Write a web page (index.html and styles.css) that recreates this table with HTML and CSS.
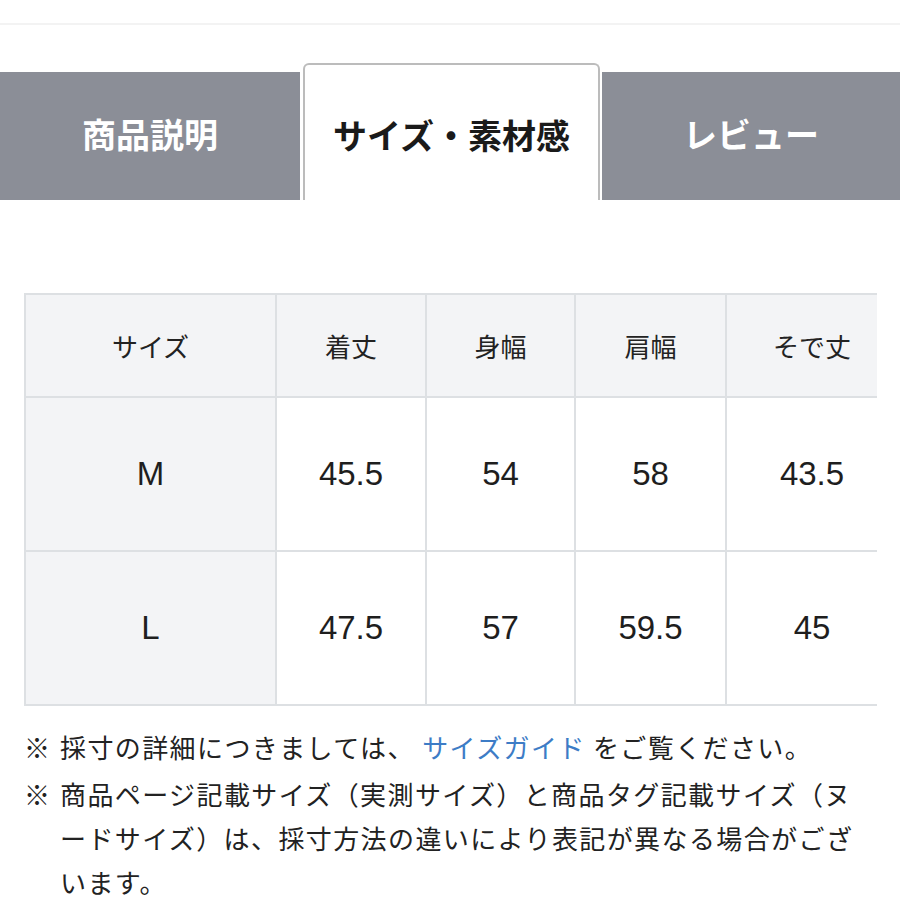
FILE: index.html
```html
<!DOCTYPE html>
<html lang="ja">
<head>
<meta charset="utf-8">
<link rel="stylesheet" href="styles.css">
</head>
<body>
<div class="topline"></div>
<div class="tabs">
  <div class="tab">商品説明</div>
  <div class="tab active">サイズ・素材感</div>
  <div class="tab">レビュー</div>
</div>
<div class="table-wrap">
  <table class="size-table">
    <tr class="head">
      <td>サイズ</td><td>着丈</td><td>身幅</td><td>肩幅</td><td>そで丈</td>
    </tr>
    <tr>
      <td class="size">M</td><td>45.5</td><td>54</td><td>58</td><td>43.5</td>
    </tr>
    <tr>
      <td class="size">L</td><td>47.5</td><td>57</td><td>59.5</td><td>45</td>
    </tr>
  </table>
</div>
<div class="notes">
  <div class="note"><span class="mark">※</span><span class="body">採寸の詳細につきましては、 <a class="link">サイズガイド</a> をご覧ください。</span></div>
  <div class="note"><span class="mark">※</span><span class="body">商品ページ記載サイズ（実測サイズ）と商品タグ記載サイズ（ヌ<br>ードサイズ）は、採寸方法の違いにより表記が異なる場合がござ<br>います。</span></div>
</div>
</body>
</html>
```
FILE: styles.css
```css
html, body {
  margin: 0;
  padding: 0;
  background: #ffffff;
}
body {
  font-family: "Noto Sans CJK JP", "Noto Sans", sans-serif;
  color: #222222;
  width: 900px;
  overflow: hidden;
}
.topline {
  height: 23px;
  border-bottom: 2px solid #f3f3f3;
}
.tabs {
  display: flex;
  align-items: flex-end;
  margin-top: 38px;
  height: 137px;
}
.tab {
  height: 128px;
  background: #8b8e97;
  color: #ffffff;
  font-size: 34px;
  font-weight: 700;
  display: flex;
  align-items: center;
  justify-content: center;
  box-sizing: border-box;
  padding-bottom: 5px;
}
.tab:first-child {
  width: 300px;
}
.tab:last-child {
  flex: 1;
}
.tab.active {
  width: 297px;
  height: 137px;
  margin: 0 2px 0 3px;
  background: #ffffff;
  color: #1a1a1a;
  border: 2px solid #bcbcbc;
  border-bottom: none;
  border-radius: 6px 6px 0 0;
  padding-top: 4px;
  padding-bottom: 0;
}
.table-wrap {
  margin: 93px 0 0 24px;
  width: 853px;
  overflow: hidden;
}
.size-table {
  border-collapse: collapse;
  width: 875px;
  table-layout: fixed;
}
.size-table td {
  border: 2px solid #dde0e3;
  text-align: center;
  vertical-align: middle;
  font-family: "Liberation Sans", Arial, sans-serif;
  font-size: 33px;
  color: #1e1e1e;
  height: 152px;
  padding: 0;
  background: #ffffff;
}
.size-table td:nth-child(1) { width: 249px; }
.size-table td:nth-child(2) { width: 148px; }
.size-table td:nth-child(3) { width: 147px; }
.size-table td:nth-child(4) { width: 149px; }
.size-table tr.head td {
  height: 101px;
  background: #f3f4f6;
  font-family: "Noto Sans CJK JP", sans-serif;
  font-size: 26px;
  color: #222222;
}
.size-table td.size {
  background: #f3f4f6;
}
.notes {
  margin-top: 19px;
  padding-left: 24px;
  font-size: 26px;
  line-height: 44px;
  letter-spacing: 1.4px;
  color: #222222;
}
.note {
  display: flex;
  margin-bottom: 3px;
}
.mark {
  flex: 0 0 36px;
  letter-spacing: 0;
}
.body {
  white-space: nowrap;
}
.link {
  color: #3d7cc6;
  text-decoration: none;
}
```
